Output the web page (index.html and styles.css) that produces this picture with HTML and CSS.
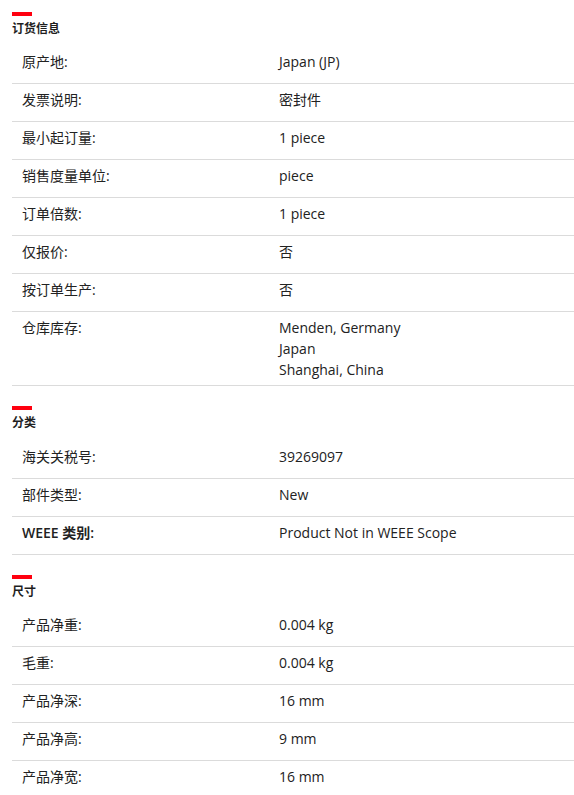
FILE: index.html
```html
<!DOCTYPE html>
<html lang="zh">
<head>
<meta charset="utf-8">
<link rel="stylesheet" href="styles.css">
</head>
<body>
<div class="page">
  <section class="section">
    <div class="bar"></div>
    <h2 class="title">订货信息</h2>
    <div class="row"><div class="label">原产地:</div><div class="value">Japan (JP)</div></div>
    <div class="row"><div class="label">发票说明:</div><div class="value">密封件</div></div>
    <div class="row"><div class="label">最小起订量:</div><div class="value">1 piece</div></div>
    <div class="row"><div class="label">销售度量单位:</div><div class="value">piece</div></div>
    <div class="row"><div class="label">订单倍数:</div><div class="value">1 piece</div></div>
    <div class="row"><div class="label">仅报价:</div><div class="value">否</div></div>
    <div class="row"><div class="label">按订单生产:</div><div class="value">否</div></div>
    <div class="row"><div class="label">仓库库存:</div><div class="value"><div>Menden, Germany</div><div>Japan</div><div>Shanghai, China</div></div></div>
  </section>
  <section class="section section-classify">
    <div class="bar"></div>
    <h2 class="title">分类</h2>
    <div class="row"><div class="label">海关关税号:</div><div class="value">39269097</div></div>
    <div class="row"><div class="label">部件类型:</div><div class="value">New</div></div>
    <div class="row"><div class="label strong">WEEE 类别:</div><div class="value">Product Not in WEEE Scope</div></div>
  </section>
  <section class="section">
    <div class="bar"></div>
    <h2 class="title">尺寸</h2>
    <div class="row"><div class="label">产品净重:</div><div class="value">0.004 kg</div></div>
    <div class="row"><div class="label">毛重:</div><div class="value">0.004 kg</div></div>
    <div class="row"><div class="label">产品净深:</div><div class="value">16 mm</div></div>
    <div class="row"><div class="label">产品净高:</div><div class="value">9 mm</div></div>
    <div class="row"><div class="label">产品净宽:</div><div class="value">16 mm</div></div>
  </section>
</div>
</body>
</html>
```
FILE: styles.css
```css
html, body {
  margin: 0;
  padding: 0;
  background: #fff;
}
body {
  font-family: "Open Sans", "Noto Sans CJK SC", sans-serif;
  font-size: 14px;
  color: #222;
  overflow: hidden;
}
.page {
  padding: 12px 0 0 12px;
}
.section + .section {
  margin-top: 20px;
}
.section-classify .title {
  margin-bottom: 10px;
}
.bar {
  width: 20px;
  height: 4px;
  background: #ff000f;
}
.title {
  margin: 4px 0 9px;
  font-size: 12px;
  line-height: 17px;
  font-weight: 700;
  color: #1f1f1f;
}
.row {
  display: grid;
  grid-template-columns: 267px 1fr;
  box-sizing: border-box;
  min-height: 38px;
  padding: 5px 0;
  border-bottom: 1px solid #dbdbdb;
  line-height: 21px;
}
.label {
  padding-left: 10px;
}
.label.strong {
  font-weight: 600;
}
```
